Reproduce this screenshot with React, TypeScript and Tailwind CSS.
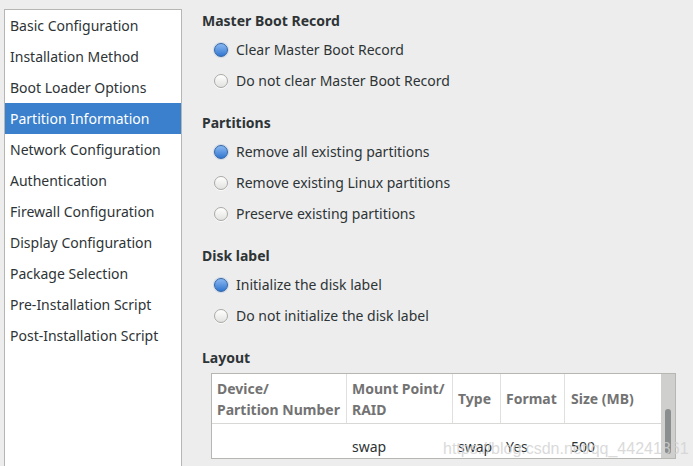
import React from 'react'

const sections = [
  'Basic Configuration',
  'Installation Method',
  'Boot Loader Options',
  'Partition Information',
  'Network Configuration',
  'Authentication',
  'Firewall Configuration',
  'Display Configuration',
  'Package Selection',
  'Pre-Installation Script',
  'Post-Installation Script',
]

const groups = [
  { title: 'Master Boot Record', options: ['Clear Master Boot Record', 'Do not clear Master Boot Record'] },
  {
    title: 'Partitions',
    options: ['Remove all existing partitions', 'Remove existing Linux partitions', 'Preserve existing partitions'],
  },
  { title: 'Disk label', options: ['Initialize the disk label', 'Do not initialize the disk label'] },
]

const Radio = ({ checked }: { checked?: boolean }) =>
  checked ? (
    <span className="h-[14px] w-[14px] rounded-full border border-[#3465a4] bg-gradient-to-b from-[#8ab8f2] to-[#2f76cf] shadow-[0_0_0_1px_rgba(150,180,220,0.35)]" />
  ) : (
    <span className="h-[14px] w-[14px] rounded-full border border-[#a9a9a6] bg-gradient-to-b from-white to-[#e2e2e0] shadow-[0_1px_0_rgba(255,255,255,0.8)]" />
  )

export default function App() {
  const selected = 'Partition Information'

  return (
    <div
      className="relative flex h-[466px] w-[693px] overflow-hidden bg-[#ededed] text-[14px] text-[#2e3436]"
      style={{ fontFamily: '"Noto Sans", "DejaVu Sans", sans-serif' }}
    >
      {/* sidebar */}
      <div className="ml-[4px] mt-[9px] h-[470px] w-[178px] border border-[#b6b6b3] bg-white">
        {sections.map(s => (
          <div
            key={s}
            className={`flex h-[31px] items-center pl-[5px] ${s === selected ? 'bg-[#3b80cc] text-white' : ''}`}
          >
            {s}
          </div>
        ))}
      </div>

      {/* content */}
      <div className="flex flex-1 flex-col pl-[20px] pt-[10px]">
        {groups.map(g => (
          <div key={g.title} className="mb-[16px]">
            <div className="flex h-[21px] items-center font-bold">{g.title}</div>
            <div className="flex flex-col pl-[12px] pt-[3px]">
              {g.options.map((o, i) => (
                <div key={o} className="flex h-[31px] items-center gap-[8px]">
                  <Radio checked={i === 0} />
                  <span>{o}</span>
                </div>
              ))}
            </div>
          </div>
        ))}

        <div className="flex h-[21px] items-center font-bold">Layout</div>
        <div className="ml-[9px] mt-[5px] flex h-[86px] w-[465px] border border-[#b6b6b3] bg-white">
          <div className="flex flex-1 flex-col">
            <div className="flex h-[50px] border-b border-[#d8d8d6] font-bold text-[#737373]">
              <div className="flex w-[135px] flex-col justify-center border-r border-[#e0e0de] pl-[5px] leading-[21px]">
                <span>Device/</span>
                <span>Partition Number</span>
              </div>
              <div className="flex w-[106px] flex-col justify-center border-r border-[#e0e0de] pl-[5px] leading-[21px]">
                <span>Mount Point/</span>
                <span>RAID</span>
              </div>
              <div className="flex w-[48px] items-center border-r border-[#e0e0de] pl-[5px]">Type</div>
              <div className="flex w-[64px] items-center border-r border-[#e0e0de] pl-[5px]">Format</div>
              <div className="flex flex-1 items-center pl-[6px]">Size (MB)</div>
            </div>
            <div className="flex flex-1 items-end pb-[1px]">
              <div className="w-[135px]" />
              <div className="w-[106px] pl-[5px]">swap</div>
              <div className="w-[48px] pl-[5px]">swap</div>
              <div className="w-[64px] pl-[5px]">Yes</div>
              <div className="flex-1 pl-[6px]">500</div>
            </div>
          </div>
          <div className="flex w-[14px] justify-center bg-[#cfcfcd] pt-[35px]">
            <div className="h-[45px] w-[6px] rounded-full bg-[#8b8e8f]" />
          </div>
        </div>
      </div>

      <div
        className="pointer-events-none absolute left-[443px] top-[437px] text-[16px] text-[#d2d2d2] opacity-80"
        style={{ fontFamily: '"Liberation Sans", Arial, sans-serif' }}
      >
        https://blog.csdn.net/qq_44241861
      </div>
    </div>
  )
}
